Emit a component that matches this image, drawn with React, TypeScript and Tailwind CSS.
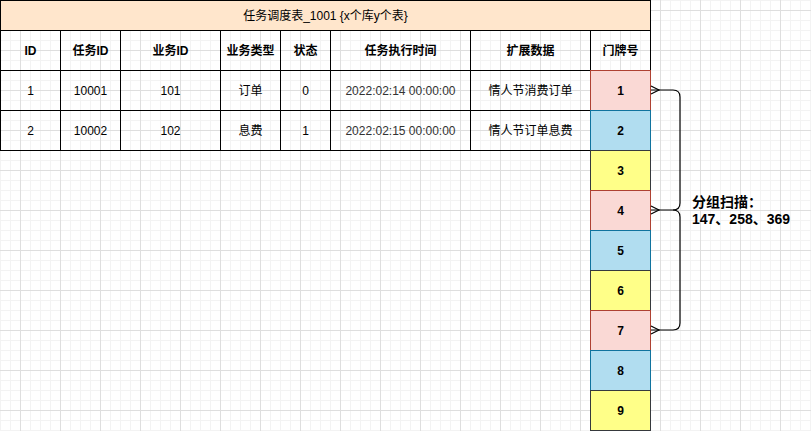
import React from "react";

const header = ["ID", "任务ID", "业务ID", "业务类型", "状态", "任务执行时间", "扩展数据"];
const rows = [
  ["1", "10001", "101", "订单", "0", "2022:02:14 00:00:00", "情人节消费订单"],
  ["2", "10002", "102", "息费", "1", "2022:02:15 00:00:00", "情人节订单息费"],
];

const pink = "bg-[#fad9d5] border-[#ae4132]";
const blue = "bg-[#b1ddf0] border-[#10739e]";
const yellow = "bg-[#ffff88] border-[#36393d]";
const doorStyles = [pink, blue, yellow, pink, blue, yellow, pink, blue, yellow];

export default function App() {
  return (
    <div className="relative w-[811px] h-[431px] overflow-hidden bg-white bg-[linear-gradient(to_right,#dedede_1px,transparent_1px),linear-gradient(to_bottom,#dedede_1px,transparent_1px),linear-gradient(to_right,#f3f3f3_1px,transparent_1px),linear-gradient(to_bottom,#f3f3f3_1px,transparent_1px)] bg-size-[40px_40px,40px_40px,10px_10px,10px_10px] bg-position-[20px_10px,20px_10px,0px_0px,0px_0px] font-['Liberation_Sans','Noto_Sans_CJK_SC',sans-serif] text-[12px] text-black">
      <div className="flex flex-col items-start">
        <div className="w-[651px] h-[31px] border border-black bg-[#ffe6cc] flex items-center justify-center">
          任务调度表_1001 {"{x个库y个表}"}
        </div>
        <div className="flex items-start">
          <div className="grid grid-cols-[60px_60px_100px_60px_50px_140px_120px] border-l border-black">
            {header.map((h, i) => (
              <div key={"h" + i} className="h-[40px] border-r border-b border-black flex items-center justify-center font-bold">
                {h}
              </div>
            ))}
            {rows.map((r, ri) =>
              r.map((c, ci) => (
                <div
                  key={ri + "-" + ci}
                  className={
                    "h-[40px] border-r border-b border-black flex items-center justify-center " +
                    (ci === 5 ? "text-[#333]" : "")
                  }
                >
                  {c}
                </div>
              ))
            )}
          </div>
          <div className="flex flex-col">
            <div className="w-[60px] h-[40px] border-r border-b border-black flex items-center justify-center font-bold">
              门牌号
            </div>
            {doorStyles.map((s, i) => (
              <div
                key={"d" + i}
                className={"-ml-px -mt-px w-[61px] h-[41px] border flex items-center justify-center font-bold " + s}
              >
                {i + 1}
              </div>
            ))}
          </div>
        </div>
      </div>
      <svg className="absolute left-0 top-0 pointer-events-none" width="811" height="431" viewBox="0 0 811 431">
        <g fill="none" stroke="#000" strokeWidth="1.2">
          <path d="M651,90 H673 Q680,90 680,97 V203 Q680,210 673,210 H651" />
          <path d="M673,210 Q680,210 680,217 V323 Q680,330 673,330 H651" />
          <polyline points="651,86 659,90 651,94" />
          <polyline points="651,206 659,210 651,214" />
          <polyline points="651,326 659,330 651,334" />
        </g>
      </svg>
      <div className="absolute left-[692px] top-[194px] font-bold text-[14px] leading-[17px]">
        <div>分组扫描：</div>
        <div>147、258、369</div>
      </div>
    </div>
  );
}
